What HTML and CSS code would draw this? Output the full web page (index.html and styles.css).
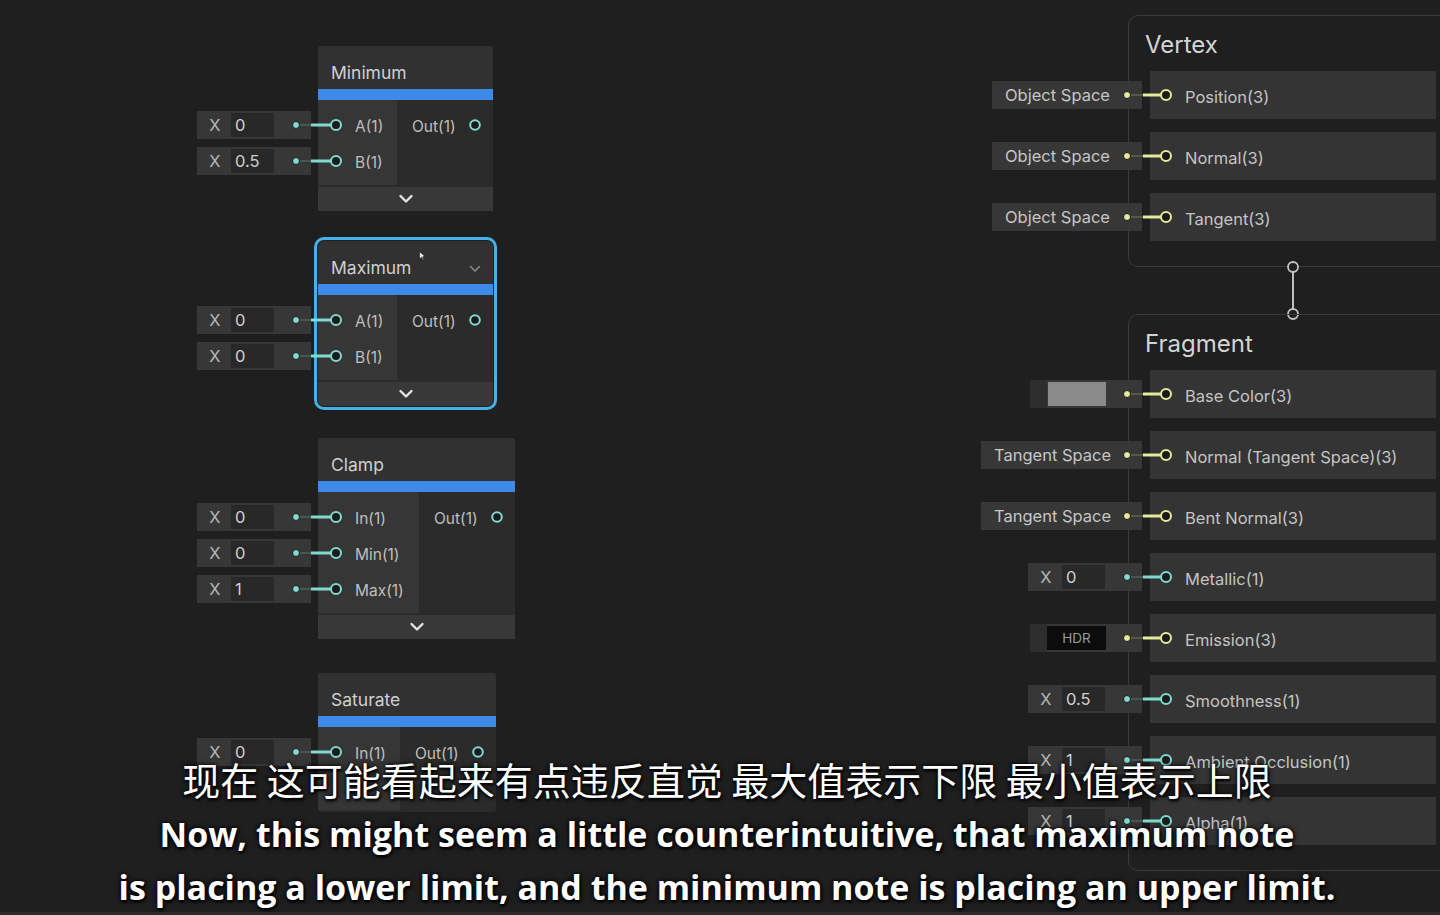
FILE: index.html
```html
<!DOCTYPE html>
<html lang="zh">
<head>
<meta charset="utf-8">
<title>Shader Graph</title>
<link rel="stylesheet" href="styles.css">
</head>
<body>
<div class="canvas">

  <!-- Minimum -->
  <div class="unit u-min">
    <div class="fields">
      <div class="field"><span class="fx">X</span><span class="fval">0</span><svg class="fdot teal" width="22" height="10" viewBox="0 0 22 10"><line x1="10" y1="5" x2="23" y2="5" class="dim"/><circle cx="6" cy="5" r="3.5" class="dot"/></svg></div>
      <div class="field"><span class="fx">X</span><span class="fval">0.5</span><svg class="fdot teal" width="22" height="10" viewBox="0 0 22 10"><line x1="10" y1="5" x2="23" y2="5" class="dim"/><circle cx="6" cy="5" r="3.5" class="dot"/></svg></div>
    </div>
    <div class="node w175">
      <div class="node-title">Minimum</div>
      <div class="node-bar"></div>
      <div class="node-body">
        <div class="col-in ci79">
          <div class="port-row"><svg class="pin teal" width="24" height="14" viewBox="0 0 24 14"><line x1="-7" y1="7" x2="13" y2="7"/><circle cx="18" cy="7" r="5"/></svg><span class="plabel">A(1)</span></div>
          <div class="port-row"><svg class="pin teal" width="24" height="14" viewBox="0 0 24 14"><line x1="-7" y1="7" x2="13" y2="7"/><circle cx="18" cy="7" r="5"/></svg><span class="plabel">B(1)</span></div>
        </div>
        <div class="col-out">
          <div class="port-row out"><span class="plabel">Out(1)</span><svg class="opin teal" width="12" height="12" viewBox="0 0 12 12"><circle cx="6" cy="6" r="4.8"/></svg></div>
        </div>
      </div>
      <div class="collapse"><svg width="16" height="10" viewBox="0 0 16 10"><path d="M2.5 2 L8 7.5 L13.5 2"/></svg></div>
    </div>
  </div>

  <!-- Maximum (selected) -->
  <div class="unit u-max">
    <div class="fields">
      <div class="field"><span class="fx">X</span><span class="fval">0</span><svg class="fdot teal" width="22" height="10" viewBox="0 0 22 10"><line x1="10" y1="5" x2="23" y2="5" class="dim"/><circle cx="6" cy="5" r="3.5" class="dot"/></svg></div>
      <div class="field"><span class="fx">X</span><span class="fval">0</span><svg class="fdot teal" width="22" height="10" viewBox="0 0 22 10"><line x1="10" y1="5" x2="23" y2="5" class="dim"/><circle cx="6" cy="5" r="3.5" class="dot"/></svg></div>
    </div>
    <div class="node w175 selected">
      <div class="node-title with-menu">Maximum<svg class="title-chev" width="12" height="8" viewBox="0 0 12 8"><path d="M1.5 1.5 L6 6 L10.5 1.5"/></svg></div>
      <div class="node-bar"></div>
      <div class="node-body">
        <div class="col-in ci79">
          <div class="port-row"><svg class="pin teal" width="24" height="14" viewBox="0 0 24 14"><line x1="-7" y1="7" x2="13" y2="7"/><circle cx="18" cy="7" r="5"/></svg><span class="plabel">A(1)</span></div>
          <div class="port-row"><svg class="pin teal" width="24" height="14" viewBox="0 0 24 14"><line x1="-7" y1="7" x2="13" y2="7"/><circle cx="18" cy="7" r="5"/></svg><span class="plabel">B(1)</span></div>
        </div>
        <div class="col-out">
          <div class="port-row out"><span class="plabel">Out(1)</span><svg class="opin teal" width="12" height="12" viewBox="0 0 12 12"><circle cx="6" cy="6" r="4.8"/></svg></div>
        </div>
      </div>
      <div class="collapse"><svg width="16" height="10" viewBox="0 0 16 10"><path d="M2.5 2 L8 7.5 L13.5 2"/></svg></div>
    </div>
  </div>

  <!-- Clamp -->
  <div class="unit u-clamp">
    <div class="fields">
      <div class="field"><span class="fx">X</span><span class="fval">0</span><svg class="fdot teal" width="22" height="10" viewBox="0 0 22 10"><line x1="10" y1="5" x2="23" y2="5" class="dim"/><circle cx="6" cy="5" r="3.5" class="dot"/></svg></div>
      <div class="field"><span class="fx">X</span><span class="fval">0</span><svg class="fdot teal" width="22" height="10" viewBox="0 0 22 10"><line x1="10" y1="5" x2="23" y2="5" class="dim"/><circle cx="6" cy="5" r="3.5" class="dot"/></svg></div>
      <div class="field"><span class="fx">X</span><span class="fval">1</span><svg class="fdot teal" width="22" height="10" viewBox="0 0 22 10"><line x1="10" y1="5" x2="23" y2="5" class="dim"/><circle cx="6" cy="5" r="3.5" class="dot"/></svg></div>
    </div>
    <div class="node w197">
      <div class="node-title">Clamp</div>
      <div class="node-bar"></div>
      <div class="node-body">
        <div class="col-in ci101">
          <div class="port-row"><svg class="pin teal" width="24" height="14" viewBox="0 0 24 14"><line x1="-7" y1="7" x2="13" y2="7"/><circle cx="18" cy="7" r="5"/></svg><span class="plabel">In(1)</span></div>
          <div class="port-row"><svg class="pin teal" width="24" height="14" viewBox="0 0 24 14"><line x1="-7" y1="7" x2="13" y2="7"/><circle cx="18" cy="7" r="5"/></svg><span class="plabel">Min(1)</span></div>
          <div class="port-row"><svg class="pin teal" width="24" height="14" viewBox="0 0 24 14"><line x1="-7" y1="7" x2="13" y2="7"/><circle cx="18" cy="7" r="5"/></svg><span class="plabel">Max(1)</span></div>
        </div>
        <div class="col-out">
          <div class="port-row out"><span class="plabel">Out(1)</span><svg class="opin teal" width="12" height="12" viewBox="0 0 12 12"><circle cx="6" cy="6" r="4.8"/></svg></div>
        </div>
      </div>
      <div class="collapse"><svg width="16" height="10" viewBox="0 0 16 10"><path d="M2.5 2 L8 7.5 L13.5 2"/></svg></div>
    </div>
  </div>

  <!-- Saturate -->
  <div class="unit u-sat">
    <div class="fields">
      <div class="field"><span class="fx">X</span><span class="fval">0</span><svg class="fdot teal" width="22" height="10" viewBox="0 0 22 10"><line x1="10" y1="5" x2="23" y2="5" class="dim"/><circle cx="6" cy="5" r="3.5" class="dot"/></svg></div>
    </div>
    <div class="node w178">
      <div class="node-title">Saturate</div>
      <div class="node-bar"></div>
      <div class="node-body">
        <div class="col-in ci82 tall">
          <div class="port-row"><svg class="pin teal" width="24" height="14" viewBox="0 0 24 14"><line x1="-7" y1="7" x2="13" y2="7"/><circle cx="18" cy="7" r="5"/></svg><span class="plabel">In(1)</span></div>
        </div>
        <div class="col-out">
          <div class="port-row out"><span class="plabel">Out(1)</span><svg class="opin teal" width="12" height="12" viewBox="0 0 12 12"><circle cx="6" cy="6" r="4.8"/></svg></div>
        </div>
      </div>
    </div>
  </div>

  <!-- cursor -->
  <svg class="cursor" width="7" height="10" viewBox="0 0 7 10"><path d="M0.5 0.5 L0.5 8 L2.5 6.2 L4 9 L5 8.5 L3.6 5.8 L6 5.6 Z"/></svg>

  <!-- Vertex context -->
  <div class="ctx ctx-vertex">
    <div class="ctx-title">Vertex</div>
    <div class="crows">
      <div class="crow">
        <div class="fslot"><div class="field wide150"><span class="ftext">Object Space</span><svg class="fdot yellow" width="22" height="10" viewBox="0 0 22 10"><line x1="10" y1="5" x2="23" y2="5" class="dim"/><circle cx="6" cy="5" r="3.5" class="dot"/></svg></div></div>
        <div class="blk"><svg class="bpin yellow" width="24" height="14" viewBox="0 0 24 14"><line x1="-7" y1="7" x2="11" y2="7"/><circle cx="16" cy="7" r="5"/></svg><span class="blabel">Position(3)</span></div>
      </div>
      <div class="crow">
        <div class="fslot"><div class="field wide150"><span class="ftext">Object Space</span><svg class="fdot yellow" width="22" height="10" viewBox="0 0 22 10"><line x1="10" y1="5" x2="23" y2="5" class="dim"/><circle cx="6" cy="5" r="3.5" class="dot"/></svg></div></div>
        <div class="blk"><svg class="bpin yellow" width="24" height="14" viewBox="0 0 24 14"><line x1="-7" y1="7" x2="11" y2="7"/><circle cx="16" cy="7" r="5"/></svg><span class="blabel">Normal(3)</span></div>
      </div>
      <div class="crow">
        <div class="fslot"><div class="field wide150"><span class="ftext">Object Space</span><svg class="fdot yellow" width="22" height="10" viewBox="0 0 22 10"><line x1="10" y1="5" x2="23" y2="5" class="dim"/><circle cx="6" cy="5" r="3.5" class="dot"/></svg></div></div>
        <div class="blk"><svg class="bpin yellow" width="24" height="14" viewBox="0 0 24 14"><line x1="-7" y1="7" x2="11" y2="7"/><circle cx="16" cy="7" r="5"/></svg><span class="blabel">Tangent(3)</span></div>
      </div>
    </div>
  </div>

  <!-- Vertex -> Fragment link -->
  <svg class="ctx-link" width="14" height="64" viewBox="0 0 14 64"><line x1="7" y1="13" x2="7" y2="50"/><circle cx="7" cy="8" r="5"/><circle cx="7" cy="55" r="5"/></svg>

  <!-- Fragment context -->
  <div class="ctx ctx-fragment">
    <div class="ctx-title">Fragment</div>
    <div class="crows">
      <div class="crow">
        <div class="fslot"><div class="field wide112 colorfield"><span class="cf-pad"></span><span class="swatch"></span><svg class="fdot yellow" width="22" height="10" viewBox="0 0 22 10"><line x1="10" y1="5" x2="23" y2="5" class="dim"/><circle cx="6" cy="5" r="3.5" class="dot"/></svg></div></div>
        <div class="blk"><svg class="bpin yellow" width="24" height="14" viewBox="0 0 24 14"><line x1="-7" y1="7" x2="11" y2="7"/><circle cx="16" cy="7" r="5"/></svg><span class="blabel">Base Color(3)</span></div>
      </div>
      <div class="crow">
        <div class="fslot"><div class="field wide161"><span class="ftext">Tangent Space</span><svg class="fdot yellow" width="22" height="10" viewBox="0 0 22 10"><line x1="10" y1="5" x2="23" y2="5" class="dim"/><circle cx="6" cy="5" r="3.5" class="dot"/></svg></div></div>
        <div class="blk"><svg class="bpin yellow" width="24" height="14" viewBox="0 0 24 14"><line x1="-7" y1="7" x2="11" y2="7"/><circle cx="16" cy="7" r="5"/></svg><span class="blabel">Normal (Tangent Space)(3)</span></div>
      </div>
      <div class="crow">
        <div class="fslot"><div class="field wide161"><span class="ftext">Tangent Space</span><svg class="fdot yellow" width="22" height="10" viewBox="0 0 22 10"><line x1="10" y1="5" x2="23" y2="5" class="dim"/><circle cx="6" cy="5" r="3.5" class="dot"/></svg></div></div>
        <div class="blk"><svg class="bpin yellow" width="24" height="14" viewBox="0 0 24 14"><line x1="-7" y1="7" x2="11" y2="7"/><circle cx="16" cy="7" r="5"/></svg><span class="blabel">Bent Normal(3)</span></div>
      </div>
      <div class="crow">
        <div class="fslot"><div class="field"><span class="fx">X</span><span class="fval">0</span><svg class="fdot teal" width="22" height="10" viewBox="0 0 22 10"><line x1="10" y1="5" x2="23" y2="5" class="dim"/><circle cx="6" cy="5" r="3.5" class="dot"/></svg></div></div>
        <div class="blk"><svg class="bpin teal" width="24" height="14" viewBox="0 0 24 14"><line x1="-7" y1="7" x2="11" y2="7"/><circle cx="16" cy="7" r="5"/></svg><span class="blabel">Metallic(1)</span></div>
      </div>
      <div class="crow">
        <div class="fslot"><div class="field wide112 colorfield"><span class="cf-pad"></span><span class="hdr">HDR</span><svg class="fdot yellow" width="22" height="10" viewBox="0 0 22 10"><line x1="10" y1="5" x2="23" y2="5" class="dim"/><circle cx="6" cy="5" r="3.5" class="dot"/></svg></div></div>
        <div class="blk"><svg class="bpin yellow" width="24" height="14" viewBox="0 0 24 14"><line x1="-7" y1="7" x2="11" y2="7"/><circle cx="16" cy="7" r="5"/></svg><span class="blabel">Emission(3)</span></div>
      </div>
      <div class="crow">
        <div class="fslot"><div class="field"><span class="fx">X</span><span class="fval">0.5</span><svg class="fdot teal" width="22" height="10" viewBox="0 0 22 10"><line x1="10" y1="5" x2="23" y2="5" class="dim"/><circle cx="6" cy="5" r="3.5" class="dot"/></svg></div></div>
        <div class="blk"><svg class="bpin teal" width="24" height="14" viewBox="0 0 24 14"><line x1="-7" y1="7" x2="11" y2="7"/><circle cx="16" cy="7" r="5"/></svg><span class="blabel">Smoothness(1)</span></div>
      </div>
      <div class="crow">
        <div class="fslot"><div class="field"><span class="fx">X</span><span class="fval">1</span><svg class="fdot teal" width="22" height="10" viewBox="0 0 22 10"><line x1="10" y1="5" x2="23" y2="5" class="dim"/><circle cx="6" cy="5" r="3.5" class="dot"/></svg></div></div>
        <div class="blk"><svg class="bpin teal" width="24" height="14" viewBox="0 0 24 14"><line x1="-7" y1="7" x2="11" y2="7"/><circle cx="16" cy="7" r="5"/></svg><span class="blabel">Ambient Occlusion(1)</span></div>
      </div>
      <div class="crow">
        <div class="fslot"><div class="field"><span class="fx">X</span><span class="fval">1</span><svg class="fdot teal" width="22" height="10" viewBox="0 0 22 10"><line x1="10" y1="5" x2="23" y2="5" class="dim"/><circle cx="6" cy="5" r="3.5" class="dot"/></svg></div></div>
        <div class="blk"><svg class="bpin teal" width="24" height="14" viewBox="0 0 24 14"><line x1="-7" y1="7" x2="11" y2="7"/><circle cx="16" cy="7" r="5"/></svg><span class="blabel">Alpha(1)</span></div>
      </div>
    </div>
  </div>

  <!-- subtitles -->
  <div class="subs">
    <div class="sub sub-cn">现在 这可能看起来有点违反直觉 最大值表示下限 最小值表示上限</div>
    <div class="sub sub-en">Now, this might seem a little counterintuitive, that maximum note</div>
    <div class="sub sub-en">is placing a lower limit, and the minimum note is placing an upper limit.</div>
  </div>
</div>
<div class="bottom-strip"></div>
</body>
</html>
```

FILE: styles.css
```css
* { box-sizing: border-box; }

html, body {
  margin: 0;
  padding: 0;
  background: #1f1f1f;
}

body {
  width: 1440px;
  height: 915px;
  overflow: hidden;
  font-family: Inter, "Noto Sans", sans-serif;
  color: #c2c2c2;
}

.canvas {
  position: relative;
  width: 1440px;
  height: 912px;
  overflow: hidden;
  background: #1f1f1f;
}

.bottom-strip {
  height: 3px;
  background: #2b2b2b;
}

/* ---------- left graph nodes ---------- */
.unit {
  position: absolute;
  left: 197px;
  display: flex;
  align-items: flex-start;
  gap: 7px;
}
.u-min   { top: 46px; }
.u-max   { top: 241px; }
.u-clamp { top: 438px; }
.u-sat   { top: 673px; }

.fields {
  width: 114px;
  display: flex;
  flex-direction: column;
  gap: 8px;
  padding-top: 65px;
}

.field {
  width: 114px;
  height: 28px;
  background: #373737;
  display: flex;
  align-items: center;
  font-size: 16.5px;
  color: #c6c6c6;
}
.fx {
  width: 36px;
  text-align: center;
  color: #b8b8b8;
}
.fval {
  width: 43px;
  height: 24px;
  line-height: 24px;
  background: #282828;
  padding-left: 4px;
  margin-left: -2px;
  color: #d0d0d0;
}
.ftext {
  padding-left: 13px;
  white-space: nowrap;
  color: #c6c6c6;
}
.fdot {
  margin-left: auto;
  margin-right: -1px;
  overflow: visible;
  flex: none;
}
.fdot .dim { stroke: #4a5554; stroke-width: 2; }
.fdot.yellow .dim { stroke: #57574a; }
.fdot .dot { fill: currentColor; stroke: #1a1a1a; stroke-width: 1; }

.teal { color: #82d9cf; }
.yellow { color: #e9e99c; }

.node {
  background: #2b2b2b;
  border-radius: 3px;
  overflow: visible;
}
.w175 { width: 175px; }
.w178 { width: 178px; }
.w197 { width: 197px; }

.node.selected {
  border-radius: 6px;
  box-shadow: 0 0 0 1px #1f1f1f, 0 0 0 4px #44b1ea;
}
.node.selected .node-title { border-radius: 6px 6px 0 0; }
.node.selected .collapse { border-radius: 0 0 6px 6px; }

.node-title {
  height: 43px;
  padding: 17px 0 0 13px;
  font-size: 17.5px;
  line-height: 20px;
  color: #d0d0d0;
  background: #313131;
  border-radius: 3px 3px 0 0;
}
.node-title.with-menu {
  display: flex;
  align-items: flex-start;
  padding-right: 12px;
}
.title-chev {
  margin-left: auto;
  margin-top: 7px;
  fill: none;
  stroke: #8a8a8a;
  stroke-width: 1.6;
  stroke-linecap: round;
  stroke-linejoin: round;
}

.node-bar {
  height: 11px;
  background: #3d8be8;
}

.node-body {
  display: flex;
  align-items: flex-start;
}
.col-in {
  background: #363636;
  padding: 7px 0 6px;
  margin-bottom: 2px;
  flex: none;
}
.ci79  { width: 79px; }
.ci82  { width: 82px; }
.ci101 { width: 101px; }
.col-in.tall { padding-bottom: 40px; }

.col-out {
  flex: 1;
  padding: 7px 12px 0 15px;
}

.port-row {
  height: 36px;
  display: flex;
  align-items: center;
}
.port-row.out {
  justify-content: space-between;
}

.plabel {
  font-size: 15.5px;
  color: #bfbfbf;
  white-space: nowrap;
  padding-top: 2px;
}

.pin {
  overflow: visible;
  flex: none;
  margin-right: 13px;
}
.pin line, .bpin line {
  stroke: currentColor;
  stroke-width: 3;
}
.pin circle, .bpin circle, .opin circle {
  fill: #1b1b1b;
  stroke: currentColor;
  stroke-width: 2;
}
.opin { flex: none; overflow: visible; }

.collapse {
  height: 24px;
  background: #383838;
  display: flex;
  align-items: center;
  justify-content: center;
}
.collapse svg path {
  fill: none;
  stroke: #e4e4e4;
  stroke-width: 2.4;
  stroke-linecap: round;
  stroke-linejoin: round;
}

.cursor {
  position: absolute;
  left: 419px;
  top: 251px;
}
.cursor path {
  fill: #f0f0f0;
  stroke: #111;
  stroke-width: 0.6;
}

/* ---------- master stack contexts ---------- */
.ctx {
  position: absolute;
  left: 1128px;
  width: 340px;
  border: 1px solid #3a3a3a;
  border-radius: 10px;
  padding: 0 0 25px 21px;
}
.ctx-vertex { top: 15px; }
.ctx-fragment { top: 314px; }

.ctx-title {
  height: 55px;
  padding: 15px 0 0 16px;
  margin-left: -21px;
  font-size: 24px;
  line-height: 28px;
  color: #d4d4d4;
}

.crows {
  display: flex;
  flex-direction: column;
  gap: 13px;
}
.crow {
  display: flex;
  align-items: center;
  height: 48px;
}
.fslot {
  width: 170px;
  margin-left: -178px;
  margin-right: 8px;
  display: flex;
  justify-content: flex-end;
  align-items: center;
  flex: none;
}
.wide150 { width: 150px; }
.wide161 { width: 161px; }
.wide112 { width: 112px; }

.colorfield .cf-pad {
  width: 17px;
  height: 28px;
  background: #2e2e2e;
}
.swatch {
  width: 58px;
  height: 24px;
  margin-left: 1px;
  background: #8a8a8a;
}
.hdr {
  width: 59px;
  height: 24px;
  line-height: 24px;
  text-align: center;
  background: #0c0c0c;
  color: #9a9a9a;
  font-size: 13.5px;
}

.blk {
  width: 286px;
  height: 48px;
  background: #343434;
  display: flex;
  align-items: center;
  flex: none;
}
.bpin {
  overflow: visible;
  flex: none;
  margin-right: 11px;
}
.blabel {
  font-size: 16.5px;
  color: #c4c4c4;
  padding-top: 4px;
  white-space: nowrap;
}

.ctx-link {
  position: absolute;
  left: 1286px;
  top: 259px;
}
.ctx-link line {
  stroke: #bdbdbd;
  stroke-width: 2;
}
.ctx-link circle {
  fill: #1f1f1f;
  stroke: #c4c4c4;
  stroke-width: 1.8;
}

/* ---------- subtitles ---------- */
.subs {
  position: absolute;
  left: 0;
  right: 0;
  top: 755px;
  padding-left: 14px;
  text-align: center;
  color: #ffffff;
}
.sub {
  height: 53px;
  line-height: 53px;
  white-space: nowrap;
  text-shadow: 0 0 3px #000, 1px 2px 3px #000, 0 0 6px rgba(0,0,0,0.8);
}
.sub-cn {
  font-family: "Noto Sans CJK SC", sans-serif;
  font-weight: 400;
  font-size: 38px;
  margin-top: -3px;
  margin-bottom: 3px;
}
.sub-en {
  font-family: "Open Sans", sans-serif;
  font-weight: 700;
  font-size: 34px;
}
```
